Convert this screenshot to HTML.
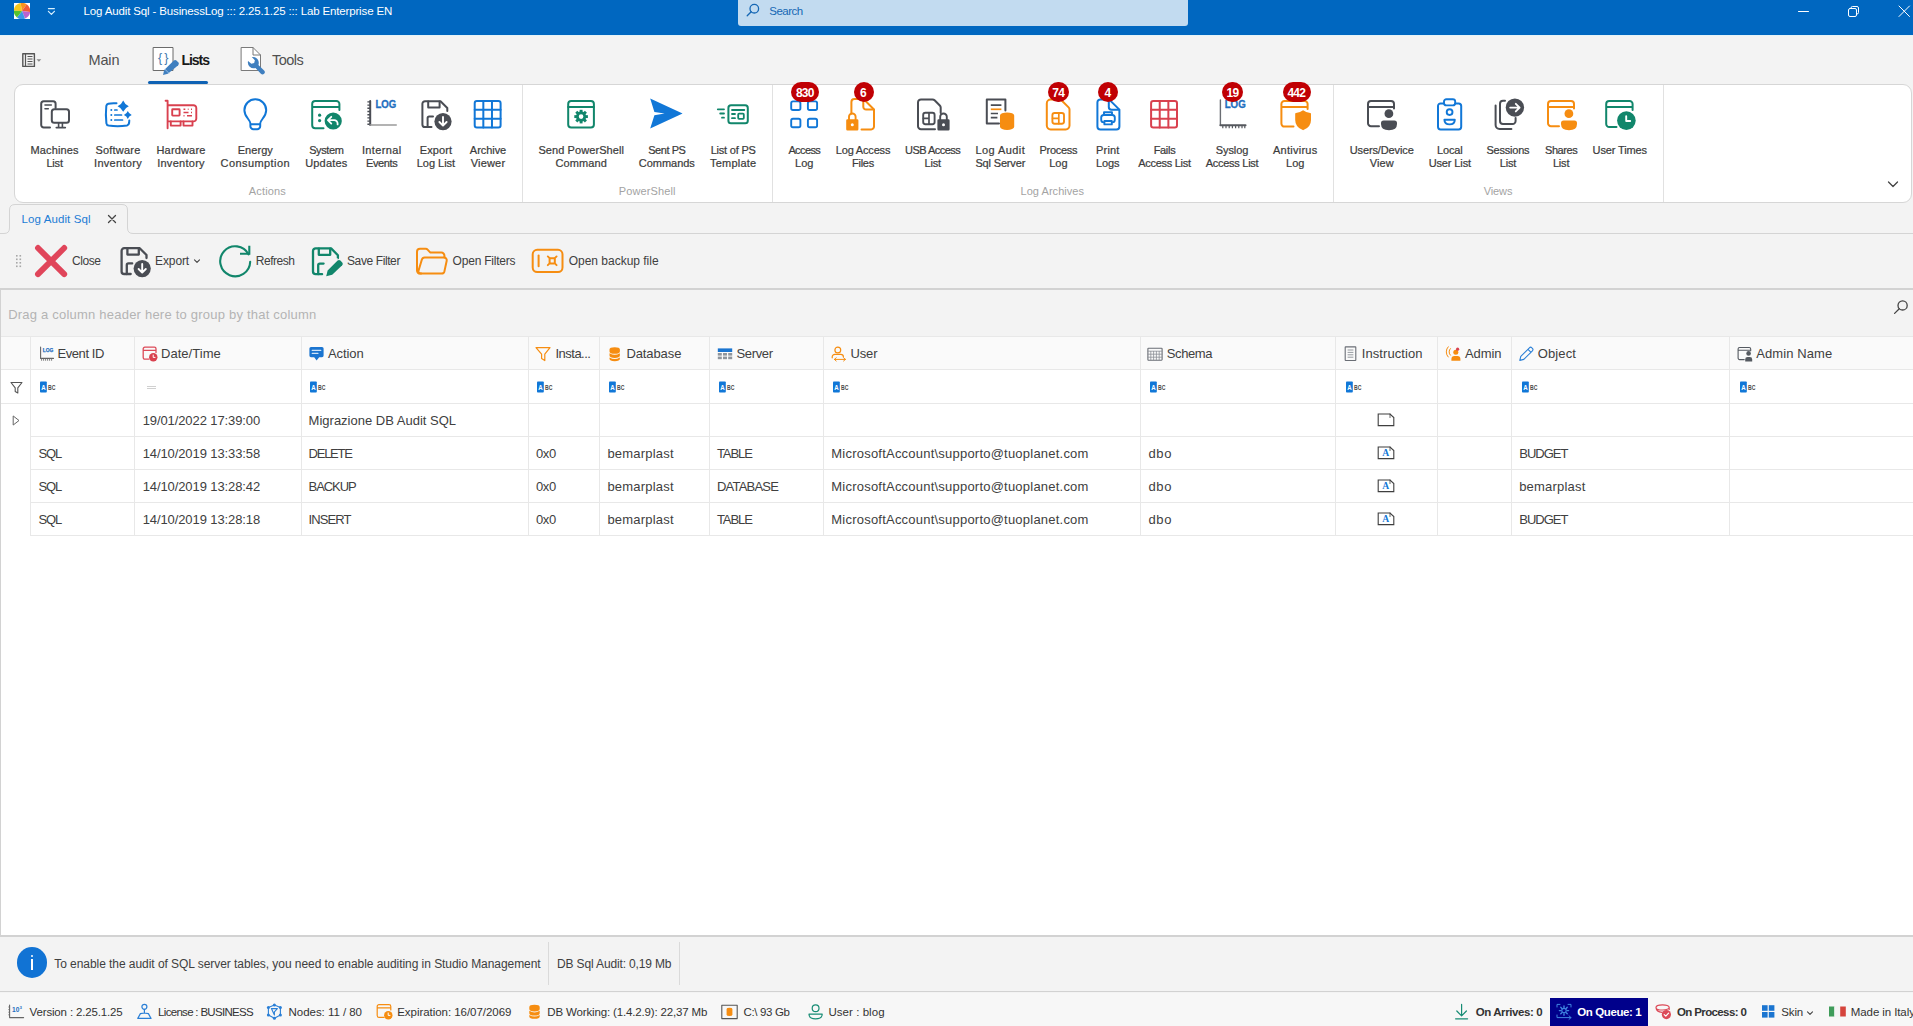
<!DOCTYPE html>
<html lang="en"><head><meta charset="utf-8"><title>Log Audit Sql - BusinessLog</title><style>
html,body{margin:0;padding:0}
body{width:1913px;height:1026px;overflow:hidden;background:#f3f3f3;position:relative;font-family:"Liberation Sans",sans-serif}
.b{position:absolute;display:block;box-sizing:border-box}
svg.b{overflow:visible}
.t{position:absolute;white-space:pre;line-height:16px;font-family:"Liberation Sans",sans-serif}
</style></head>
<body>
<div class="b" style="left:0px;top:0px;width:1913px;height:35px;background:#0067c0"></div>
<div class="b" style="left:0px;top:35px;width:1913px;height:1px;background:#e4f3f8"></div>
<svg class="b" style="left:14px;top:3px;overflow:hidden" width="16" height="16" viewBox="0 0 16 16" fill="none" stroke-linecap="round" stroke-linejoin="round"><rect x="0" y="0" width="16" height="16" fill="#fdfdfd" stroke="none"/><path d="M8 8 L6.58 -0.08 A8.2 8.2 0 0 0 -0.20 7.71 Z" fill="#f8c81c" stroke="none"/><path d="M8 8 L12.70 1.28 A8.2 8.2 0 0 0 6.58 -0.08 Z" fill="#f7921e" stroke="none"/><path d="M8 8 L16.12 9.14 A8.2 8.2 0 0 0 12.70 1.28 Z" fill="#ee5a38" stroke="none"/><path d="M8 8 L11.07 15.60 A8.2 8.2 0 0 0 16.12 9.14 Z" fill="#bb62cf" stroke="none"/><path d="M8 8 L2.95 14.46 A8.2 8.2 0 0 0 11.07 15.60 Z" fill="#3a97e6" stroke="none"/><path d="M8 8 L-0.20 7.71 A8.2 8.2 0 0 0 2.95 14.46 Z" fill="#57c22d" stroke="none"/></svg>
<svg class="b" style="left:47px;top:6px;" width="10" height="10" viewBox="0 0 10 10" fill="none" stroke-linecap="round" stroke-linejoin="round"><path d="M1.4 2.6 H7.4 " stroke="#d9f1ff" stroke-width="1.1" fill="none" /><path d="M1.4 5.3 L4.4 8.4 L7.4 5.3" stroke="#d9f1ff" stroke-width="1.2" fill="none" /></svg>
<span class="t" style="left:83.60px;top:3.32px;font-size:11.5px;color:#fff;letter-spacing:-0.146px;">Log Audit Sql - BusinessLog ::: 2.25.1.25 ::: Lab Enterprise EN</span>
<div class="b" style="left:738px;top:0px;width:450px;height:26px;background:#c2dbf0;border-radius:0 0 3px 3px"></div>
<svg class="b" style="left:746px;top:3px;" width="14" height="14" viewBox="0 0 14 14" fill="none" stroke-linecap="round" stroke-linejoin="round"><circle cx="8.3" cy="5.7" r="4.3" stroke="#1567b4" stroke-width="1.3" fill="none"/><path d="M5.2 8.8 L1.2 12.8" stroke="#1567b4" stroke-width="1.3" fill="none" /></svg>
<span class="t" style="left:769.30px;top:2.82px;font-size:11.5px;color:#1567b4;letter-spacing:-0.506px;">Search</span>
<svg class="b" style="left:1797px;top:5px;" width="13" height="13" viewBox="0 0 13 13" fill="none" stroke-linecap="round" stroke-linejoin="round"><path d="M1.5 6.5 H11.5" stroke="#fff" stroke-width="1" fill="none" /></svg>
<svg class="b" style="left:1847px;top:5px;" width="13" height="13" viewBox="0 0 13 13" fill="none" stroke-linecap="round" stroke-linejoin="round"><rect x="1.5" y="3.5" width="8" height="8" rx="1.5" stroke="#fff" stroke-width="1" fill="none"/><path d="M4 3.5 V3 A1.5 1.5 0 0 1 5.5 1.5 H10 A1.5 1.5 0 0 1 11.5 3 V7.5 A1.5 1.5 0 0 1 10 9 H9.5" stroke="#fff" stroke-width="1" fill="none" /></svg>
<svg class="b" style="left:1898px;top:5px;" width="13" height="13" viewBox="0 0 13 13" fill="none" stroke-linecap="round" stroke-linejoin="round"><path d="M1 1 L11.5 11.5 M11.5 1 L1 11.5" stroke="#fff" stroke-width="1" fill="none" /></svg>
<svg class="b" style="left:21px;top:52px;" width="24" height="16" viewBox="0 0 24 16" fill="none" stroke-linecap="round" stroke-linejoin="round"><rect x="1.8" y="1.8" width="11.6" height="12.6" rx="0" stroke="#555" stroke-width="1.4" fill="none"/><path d="M4.5 2 V14" stroke="#555" stroke-width="1.2" fill="none" /><path d="M6.5 4.5 H11.5 M6.5 7 H11.5 M6.5 9.5 H11.5 M6.5 12 H11.5" stroke="#555" stroke-width="1.1" fill="none" stroke-linecap="butt"/><path d="M15.5 7.2 H20.3 L17.9 9.8 Z" fill="#8a8a8a" stroke="none" /></svg>
<span class="t" style="left:88.50px;top:52.28px;font-size:14.5px;color:#505050;letter-spacing:-0.157px;">Main</span>
<svg class="b" style="left:150px;top:44px;" width="32" height="32" viewBox="0 0 32 32" fill="none" stroke-linecap="round" stroke-linejoin="round"><rect x="3.5" y="3.5" width="19.5" height="23" rx="0" stroke="#6b6b6b" stroke-width="1" fill="#fff"/><text x="13.3" y="17.6" text-anchor="middle" font-family="Liberation Sans, sans-serif" font-size="12.5" fill="#3f78ad" stroke="none" textLength="10.4">{ }</text><path d="M13 31 L14.2 26.1 L23.6 16.7 a2.2 2.2 0 0 1 3.1 0 l1.5 1.5 a2.2 2.2 0 0 1 0 3.1 L17.9 29.8 Z" fill="#3f7fbf" stroke="none" /><path d="M14.9 25.2 L18.8 29.1" stroke="#a9c9ea" stroke-width="0.8" fill="none" /></svg>
<span class="t" style="left:181.50px;top:52.45px;font-size:14px;color:#1a1a1a;letter-spacing:-1.035px;font-weight:700;">Lists</span>
<svg class="b" style="left:238px;top:44px;" width="32" height="32" viewBox="0 0 32 32" fill="none" stroke-linecap="round" stroke-linejoin="round"><path d="M3.5 3.5 H15 L22.5 11 V26.5 H3.5 Z" stroke="#7a7a7a" stroke-width="1" fill="#fff" /><path d="M15 3.5 V11 H22.5" stroke="#7a7a7a" stroke-width="1" fill="none" /><g transform="translate(-2.7 -3.3) scale(1.18)"><path d="M10.8 17.2 a5 5 0 0 0 6.3 6 L21.7 28 a1.9 1.9 0 0 0 2.7-2.7 L19.6 20.5 a5 5 0 0 0-5.6-6.6 l2.6 2.6 -0.6 2.4 -2.4 0.6 Z" fill="#3f7fbf" stroke="none" /></g></svg>
<span class="t" style="left:272.00px;top:52.28px;font-size:14.5px;color:#505050;letter-spacing:-0.510px;">Tools</span>
<div class="b" style="left:148px;top:81px;width:60px;height:3.4px;background:#0f62b4;border-radius:2px"></div>
<div class="b" style="left:14px;top:84px;width:1897.5px;height:118.5px;background:#fff;border:1px solid #d6d6d6;border-radius:9px"></div>
<div class="b" style="left:522px;top:85px;width:1px;height:117px;background:#e1e1e1"></div>
<div class="b" style="left:772px;top:85px;width:1px;height:117px;background:#e1e1e1"></div>
<div class="b" style="left:1333px;top:85px;width:1px;height:117px;background:#e1e1e1"></div>
<div class="b" style="left:1663px;top:85px;width:1px;height:117px;background:#e1e1e1"></div>
<svg class="b" style="left:1887px;top:180px;" width="12" height="9" viewBox="0 0 12 9" fill="none" stroke-linecap="round" stroke-linejoin="round"><path d="M1.5 2 L6 6.5 L10.5 2" stroke="#444" stroke-width="1.3" fill="none" /></svg>
<svg class="b" style="left:39px;top:99px;" width="32" height="32" viewBox="0 0 32 32" fill="none" stroke-linecap="round" stroke-linejoin="round"><path d="M16.6 9 V4.7 a2.5 2.5 0 0 0 -2.5 -2.5 H4.7 a2.5 2.5 0 0 0 -2.5 2.5 V26 a2.5 2.5 0 0 0 2.5 2.5 H11" stroke="#4a4d54" stroke-width="2" fill="none" /><path d="M6 6 H12.3 M6 9.7 H9.3" stroke="#4a4d54" stroke-width="1.6" fill="none" /><rect x="12.8" y="10.2" width="17.2" height="13.6" rx="2.5" stroke="#4a4d54" stroke-width="2" fill="none"/><path d="M19.6 24 V28.3 M23.4 24 V28.3" stroke="#4a4d54" stroke-width="1.6" fill="none" /><path d="M17.4 28.6 H26.2" stroke="#4a4d54" stroke-width="1.9" fill="none" /></svg>
<span class="t" style="left:30.60px;top:141.69px;font-size:11px;color:#3c3c3c;letter-spacing:0.115px;-webkit-text-stroke:0.22px #3c3c3c;">Machines</span>
<span class="t" style="left:46.40px;top:154.79px;font-size:11px;color:#3c3c3c;letter-spacing:-0.179px;-webkit-text-stroke:0.22px #3c3c3c;">List</span>
<svg class="b" style="left:102px;top:99px;" width="32" height="32" viewBox="0 0 32 32" fill="none" stroke-linecap="round" stroke-linejoin="round"><path d="M14.5 4.3 Q9 4 6.3 4.7 Q4.6 5.2 4.3 7 Q3.4 15.5 4.4 24.3 Q4.7 26.2 6.6 26.6 Q16 28 25 26.5 Q26.8 26 27.1 24 L27.3 21.5" stroke="#1177d7" stroke-width="2" fill="none" /><path d="M21.2 1.6000000000000005 Q22.768 5.632 26.799999999999997 7.2 Q22.768 8.768 21.2 12.8 Q19.631999999999998 8.768 15.6 7.2 Q19.631999999999998 5.632 21.2 1.6000000000000005 Z" fill="#1177d7" stroke="none" /><path d="M25.8 12.1 Q26.892 14.908 29.7 16 Q26.892 17.092 25.8 19.9 Q24.708000000000002 17.092 21.900000000000002 16 Q24.708000000000002 14.908 25.8 12.1 Z" fill="#1177d7" stroke="none" /><circle cx="9.3" cy="11" r="1.0" stroke="none" fill="#1177d7"/><circle cx="9.3" cy="16" r="1.0" stroke="none" fill="#1177d7"/><circle cx="9.3" cy="21" r="1.0" stroke="none" fill="#1177d7"/><path d="M12.8 11 H15 M12.8 16 H19.5 M12.8 21 H20.5" stroke="#1177d7" stroke-width="1.7" fill="none" /></svg>
<span class="t" style="left:95.40px;top:141.69px;font-size:11px;color:#3c3c3c;letter-spacing:0.224px;-webkit-text-stroke:0.22px #3c3c3c;">Software</span>
<span class="t" style="left:94.05px;top:154.79px;font-size:11px;color:#3c3c3c;letter-spacing:0.295px;-webkit-text-stroke:0.22px #3c3c3c;">Inventory</span>
<svg class="b" style="left:165px;top:99px;" width="32" height="32" viewBox="0 0 32 32" fill="none" stroke-linecap="round" stroke-linejoin="round"><path d="M0.6 1.8 H2.6 V29.3" stroke="#d9414f" stroke-width="1.9" fill="none" /><path d="M3 6.2 H28.5 a2.8 2.8 0 0 1 2.8 2.8 V19.6 a2.8 2.8 0 0 1 -2.8 2.8 H3" stroke="#d9414f" stroke-width="1.9" fill="none" /><rect x="7.2" y="10.2" width="7.4" height="6.4" rx="0.5" stroke="#d9414f" stroke-width="1.9" fill="none"/><path d="M18.5 10.2 H20.3 M22.8 10.2 H23.6 M26 10.2 H27 M18.5 13.5 H23.5 M26 13.5 H27 M18.5 16.8 H19.5 M22 16.8 H27" stroke="#d9414f" stroke-width="1.6" fill="none" stroke-linecap="butt"/><path d="M5.8 22.4 V26.6 H15.6 V22.4 M18.5 22.4 V26.6 H27.5 V22.4" stroke="#d9414f" stroke-width="1.9" fill="none" /></svg>
<span class="t" style="left:156.50px;top:141.69px;font-size:11px;color:#3c3c3c;letter-spacing:0.164px;-webkit-text-stroke:0.22px #3c3c3c;">Hardware</span>
<span class="t" style="left:157.15px;top:154.79px;font-size:11px;color:#3c3c3c;letter-spacing:0.273px;-webkit-text-stroke:0.22px #3c3c3c;">Inventory</span>
<svg class="b" style="left:239px;top:99px;" width="32" height="32" viewBox="0 0 32 32" fill="none" stroke-linecap="round" stroke-linejoin="round"><path d="M11.4 24.6 C11.4 20.5 5.4 18.2 5.4 11.2 A10.9 10.9 0 0 1 27.2 11.2 C27.2 18.2 21.2 20.5 21.2 24.6 V27.2 a3 3 0 0 1 -3 3 H14.4 a3 3 0 0 1 -3 -3 Z M11.6 25.2 H21" stroke="#1177d7" stroke-width="2" fill="none" /></svg>
<span class="t" style="left:237.70px;top:141.69px;font-size:11px;color:#3c3c3c;letter-spacing:0.058px;-webkit-text-stroke:0.22px #3c3c3c;">Energy</span>
<span class="t" style="left:220.60px;top:154.79px;font-size:11px;color:#3c3c3c;letter-spacing:0.417px;-webkit-text-stroke:0.22px #3c3c3c;">Consumption</span>
<svg class="b" style="left:311px;top:99px;" width="32" height="32" viewBox="0 0 32 32" fill="none" stroke-linecap="round" stroke-linejoin="round"><path d="M12.5 29.2 H4.2 a3 3 0 0 1 -3 -3 V5 a3 3 0 0 1 3 -3 H25.4 a3 3 0 0 1 3 3 V11 M1.2 8 H28.4" stroke="#11866b" stroke-width="2" fill="none" /><circle cx="8.6" cy="16.2" r="1.6" stroke="none" fill="#11866b"/><circle cx="8.6" cy="21.6" r="1.6" stroke="none" fill="#11866b"/><circle cx="22.2" cy="22" r="8.6" stroke="none" fill="#11866b"/><path d="M20.3 17.8 L16.9 21.2 L20.3 24.6 M17.2 21.2 H23.2 a3.4 3.4 0 0 1 3.4 3.4 V25.4" stroke="#fff" stroke-width="1.8" fill="none" /></svg>
<span class="t" style="left:309.15px;top:141.69px;font-size:11px;color:#3c3c3c;letter-spacing:-0.396px;-webkit-text-stroke:0.22px #3c3c3c;">System</span>
<span class="t" style="left:305.20px;top:154.79px;font-size:11px;color:#3c3c3c;letter-spacing:0.175px;-webkit-text-stroke:0.22px #3c3c3c;">Updates</span>
<svg class="b" style="left:366px;top:99px;" width="32" height="32" viewBox="0 0 32 32" fill="none" stroke-linecap="round" stroke-linejoin="round"><path d="M4.2 2 V26" stroke="#4a4d54" stroke-width="2" fill="none" /><path d="M1.4 2.9 H4 M1.4 6.1 H4 M1.4 9.3 H4 M1.4 12.5 H4 M1.4 15.7 H4 M1.4 18.9 H4 M1.4 22.1 H4 M1.4 25.3 H4" stroke="#4a4d54" stroke-width="1.4" fill="none" stroke-linecap="butt"/><path d="M4.2 26 H30.2" stroke="#9a9a9a" stroke-width="1.6" fill="none" /><text x="9.5" y="9.3" font-family="Liberation Sans, sans-serif" font-weight="700" font-size="10.6" fill="#1f6fbf" stroke="#1f6fbf" stroke-width="0.35" textLength="20.8" lengthAdjust="spacingAndGlyphs">LOG</text></svg>
<span class="t" style="left:361.95px;top:141.69px;font-size:11px;color:#3c3c3c;letter-spacing:0.351px;-webkit-text-stroke:0.22px #3c3c3c;">Internal</span>
<span class="t" style="left:366.00px;top:154.79px;font-size:11px;color:#3c3c3c;letter-spacing:-0.372px;-webkit-text-stroke:0.22px #3c3c3c;">Events</span>
<svg class="b" style="left:420px;top:99px;" width="32" height="32" viewBox="0 0 32 32" fill="none" stroke-linecap="round" stroke-linejoin="round"><path d="M11.5 28 H5 a2.6 2.6 0 0 1 -2.6 -2.6 V4.8 a2.6 2.6 0 0 1 2.6 -2.6 H20.5 L27.3 9 V12" stroke="#4a4d54" stroke-width="2" fill="none" /><path d="M8.2 2.5 V8.6 H19.6 V2.5" stroke="#4a4d54" stroke-width="2" fill="none" /><path d="M7.6 28 V19 a1.6 1.6 0 0 1 1.6 -1.6 H13" stroke="#4a4d54" stroke-width="2" fill="none" /><circle cx="23" cy="22.6" r="8.6" stroke="none" fill="#4a4d54"/><path d="M23 18 V26.4 M19.4 23 L23 26.6 L26.6 23" stroke="#fff" stroke-width="1.9" fill="none" /></svg>
<span class="t" style="left:419.75px;top:141.69px;font-size:11px;color:#3c3c3c;letter-spacing:0.085px;-webkit-text-stroke:0.22px #3c3c3c;">Export</span>
<span class="t" style="left:416.75px;top:154.79px;font-size:11px;color:#3c3c3c;letter-spacing:-0.028px;-webkit-text-stroke:0.22px #3c3c3c;">Log List</span>
<svg class="b" style="left:472px;top:99px;" width="32" height="32" viewBox="0 0 32 32" fill="none" stroke-linecap="round" stroke-linejoin="round"><rect x="2.7" y="2" width="25.900000000000002" height="26.5" rx="2.2" stroke="#1177d7" stroke-width="2" fill="none"/><path d="M11.33 2 V28.5 M19.97 2 V28.5 M2.7 10.83 H28.6 M2.7 19.67 H28.6" stroke="#1177d7" stroke-width="2" fill="none" /></svg>
<span class="t" style="left:469.85px;top:141.69px;font-size:11px;color:#3c3c3c;letter-spacing:-0.054px;-webkit-text-stroke:0.22px #3c3c3c;">Archive</span>
<span class="t" style="left:470.75px;top:154.79px;font-size:11px;color:#3c3c3c;letter-spacing:0.179px;-webkit-text-stroke:0.22px #3c3c3c;">Viewer</span>
<svg class="b" style="left:565px;top:99px;" width="32" height="32" viewBox="0 0 32 32" fill="none" stroke-linecap="round" stroke-linejoin="round"><rect x="3.2" y="2" width="25.7" height="26.5" rx="3" stroke="#11866b" stroke-width="2" fill="none"/><path d="M3.2 8 H28.9" stroke="#11866b" stroke-width="2" fill="none" /><line x1="19.70" y1="17.60" x2="22.90" y2="17.60" stroke="#11866b" stroke-width="2.9" stroke-linecap="butt"/><line x1="18.65" y1="20.15" x2="20.91" y2="22.41" stroke="#11866b" stroke-width="2.9" stroke-linecap="butt"/><line x1="16.10" y1="21.20" x2="16.10" y2="24.40" stroke="#11866b" stroke-width="2.9" stroke-linecap="butt"/><line x1="13.55" y1="20.15" x2="11.29" y2="22.41" stroke="#11866b" stroke-width="2.9" stroke-linecap="butt"/><line x1="12.50" y1="17.60" x2="9.30" y2="17.60" stroke="#11866b" stroke-width="2.9" stroke-linecap="butt"/><line x1="13.55" y1="15.05" x2="11.29" y2="12.79" stroke="#11866b" stroke-width="2.9" stroke-linecap="butt"/><line x1="16.10" y1="14.00" x2="16.10" y2="10.80" stroke="#11866b" stroke-width="2.9" stroke-linecap="butt"/><line x1="18.65" y1="15.05" x2="20.91" y2="12.79" stroke="#11866b" stroke-width="2.9" stroke-linecap="butt"/><circle cx="16.1" cy="17.6" r="3.7" stroke="#11866b" stroke-width="2.8" fill="none"/></svg>
<span class="t" style="left:538.40px;top:141.69px;font-size:11px;color:#3c3c3c;letter-spacing:0.081px;-webkit-text-stroke:0.22px #3c3c3c;">Send PowerShell</span>
<span class="t" style="left:555.50px;top:154.79px;font-size:11px;color:#3c3c3c;letter-spacing:0.094px;-webkit-text-stroke:0.22px #3c3c3c;">Command</span>
<svg class="b" style="left:650px;top:99px;" width="32" height="32" viewBox="0 0 32 32" fill="none" stroke-linecap="round" stroke-linejoin="round"><path d="M0.2 -0.4 L32.6 14.6 L0.2 29.5 L4.4 16.2 L14.6 14.6 L4.4 13 Z" fill="#1177d7" stroke="none" /></svg>
<span class="t" style="left:648.15px;top:141.69px;font-size:11px;color:#3c3c3c;letter-spacing:-0.437px;-webkit-text-stroke:0.22px #3c3c3c;">Sent PS</span>
<span class="t" style="left:638.80px;top:154.79px;font-size:11px;color:#3c3c3c;letter-spacing:-0.030px;-webkit-text-stroke:0.22px #3c3c3c;">Commands</span>
<svg class="b" style="left:717px;top:99px;" width="32" height="32" viewBox="0 0 32 32" fill="none" stroke-linecap="round" stroke-linejoin="round"><rect x="11.4" y="6.3" width="19.4" height="18" rx="2.6" stroke="#11866b" stroke-width="2" fill="none"/><path d="M0.8 10.3 H7 M3.2 14.5 H7 M5 18.7 H7" stroke="#11866b" stroke-width="1.8" fill="none" /><path d="M15 11 H27.3 M15 15 H18 M15 19.2 H18" stroke="#11866b" stroke-width="1.8" fill="none" /><rect x="21.2" y="14.6" width="5.6" height="5.2" rx="0.8" stroke="#11866b" stroke-width="1.8" fill="none"/></svg>
<span class="t" style="left:710.65px;top:141.69px;font-size:11px;color:#3c3c3c;letter-spacing:-0.198px;-webkit-text-stroke:0.22px #3c3c3c;">List of PS</span>
<span class="t" style="left:710.05px;top:154.79px;font-size:11px;color:#3c3c3c;letter-spacing:0.208px;-webkit-text-stroke:0.22px #3c3c3c;">Template</span>
<svg class="b" style="left:788px;top:99px;" width="32" height="32" viewBox="0 0 32 32" fill="none" stroke-linecap="round" stroke-linejoin="round"><rect x="3.2" y="2.4" width="9.2" height="8.6" rx="1.8" stroke="#1177d7" stroke-width="1.9" fill="none"/><rect x="19.9" y="2.4" width="9.2" height="8.6" rx="1.8" stroke="#1177d7" stroke-width="1.9" fill="none"/><rect x="3.2" y="19.7" width="9.2" height="8.6" rx="1.8" stroke="#1177d7" stroke-width="1.9" fill="none"/><rect x="19.9" y="19.7" width="9.2" height="8.6" rx="1.8" stroke="#1177d7" stroke-width="1.9" fill="none"/></svg>
<span class="t" style="left:788.40px;top:141.69px;font-size:11px;color:#3c3c3c;letter-spacing:-0.609px;-webkit-text-stroke:0.22px #3c3c3c;">Access</span>
<span class="t" style="left:795.10px;top:154.79px;font-size:11px;color:#3c3c3c;letter-spacing:0.015px;-webkit-text-stroke:0.22px #3c3c3c;">Log</span>
<div class="b" style="left:791.0px;top:82.3px;width:28px;height:19.9px;background:#c00004;border-radius:10px"></div>
<span class="t" style="left:795.90px;top:85.14px;font-size:12px;color:#fff;letter-spacing:-0.741px;font-weight:700;">830</span>
<svg class="b" style="left:844px;top:99px;" width="32" height="32" viewBox="0 0 32 32" fill="none" stroke-linecap="round" stroke-linejoin="round"><path d="M7.4 14.5 V3 a3 3 0 0 1 3 -3 H19.5 L30 10.5 V27.6 a2.8 2.8 0 0 1 -2.8 2.8 H17.5" stroke="#f68d11" stroke-width="2" fill="none" /><path d="M19.3 0.5 V7.8 a2.8 2.8 0 0 0 2.8 2.8 H29.5" stroke="#f68d11" stroke-width="2" fill="none" /><path d="M3.4000000000000004 20.2 H13.2 a1.2 1.2 0 0 1 1.2 1.2 V30.2 a1.2 1.2 0 0 1 -1.2 1.2 H3.4000000000000004 a1.2 1.2 0 0 1 -1.2 -1.2 V21.4 a1.2 1.2 0 0 1 1.2 -1.2 Z" fill="#f68d11" stroke="none" /><path d="M5.0 20.7 V17.8 a3.3 3.3 0 0 1 6.6 0 V20.7" stroke="#f68d11" stroke-width="1.9" fill="none" /><circle cx="8.3" cy="25.799999999999997" r="1.5" stroke="none" fill="#fff"/></svg>
<span class="t" style="left:835.75px;top:141.69px;font-size:11px;color:#3c3c3c;letter-spacing:-0.176px;-webkit-text-stroke:0.22px #3c3c3c;">Log Access</span>
<span class="t" style="left:852.00px;top:154.79px;font-size:11px;color:#3c3c3c;letter-spacing:-0.245px;-webkit-text-stroke:0.22px #3c3c3c;">Files</span>
<div class="b" style="left:853.5px;top:82.3px;width:20px;height:19.9px;background:#c00004;border-radius:10px"></div>
<span class="t" style="left:859.96px;top:85.14px;font-size:12px;color:#fff;font-weight:700;">6</span>
<svg class="b" style="left:917px;top:99px;" width="32" height="32" viewBox="0 0 32 32" fill="none" stroke-linecap="round" stroke-linejoin="round"><path d="M18 30.2 H4 a3 3 0 0 1 -3 -3 V3.4 a3 3 0 0 1 3 -3 H15.5 a3 3 0 0 1 2.1 0.9 L22.8 6.5 a3 3 0 0 1 0.9 2.1 V14" stroke="#4a4d54" stroke-width="2" fill="none" /><rect x="6.2" y="13.8" width="11.4" height="11.4" rx="2.2" stroke="#4a4d54" stroke-width="1.9" fill="none"/><path d="M12 14 V25 M6.4 19.4 H12" stroke="#4a4d54" stroke-width="1.7" fill="none" /><path d="M21.599999999999998 20.2 H31.4 a1.2 1.2 0 0 1 1.2 1.2 V30.2 a1.2 1.2 0 0 1 -1.2 1.2 H21.599999999999998 a1.2 1.2 0 0 1 -1.2 -1.2 V21.4 a1.2 1.2 0 0 1 1.2 -1.2 Z" fill="#4a4d54" stroke="none" /><path d="M23.2 20.7 V17.8 a3.3 3.3 0 0 1 6.6 0 V20.7" stroke="#4a4d54" stroke-width="1.9" fill="none" /><circle cx="26.5" cy="25.799999999999997" r="1.5" stroke="none" fill="#fff"/></svg>
<span class="t" style="left:905.10px;top:141.69px;font-size:11px;color:#3c3c3c;letter-spacing:-0.532px;-webkit-text-stroke:0.22px #3c3c3c;">USB Access</span>
<span class="t" style="left:924.50px;top:154.79px;font-size:11px;color:#3c3c3c;letter-spacing:-0.179px;-webkit-text-stroke:0.22px #3c3c3c;">List</span>
<svg class="b" style="left:984px;top:99px;" width="32" height="32" viewBox="0 0 32 32" fill="none" stroke-linecap="round" stroke-linejoin="round"><path d="M15 24.5 H2.8 V0.4 H21.4 V11.5" stroke="#4a4d54" stroke-width="2" fill="none" /><path d="M6.8 6.1 H17.4 M6.8 14.5 H14 M6.8 18.7 H13.4" stroke="#4a4d54" stroke-width="1.7" fill="none" stroke-linecap="butt"/><path d="M6.8 10.3 H17.4" stroke="#f68d11" stroke-width="1.7" fill="none" stroke-linecap="butt"/><path d="M16 16.6 A7.1 3.2 0 0 1 30.2 16.6 V27.8 A7.1 3.2 0 0 1 16 27.8 Z" fill="#f68d11" stroke="none" /></svg>
<span class="t" style="left:975.45px;top:141.69px;font-size:11px;color:#3c3c3c;letter-spacing:0.425px;-webkit-text-stroke:0.22px #3c3c3c;">Log Audit</span>
<span class="t" style="left:975.45px;top:154.79px;font-size:11px;color:#3c3c3c;letter-spacing:-0.166px;-webkit-text-stroke:0.22px #3c3c3c;">Sql Server</span>
<svg class="b" style="left:1042px;top:99px;" width="32" height="32" viewBox="0 0 32 32" fill="none" stroke-linecap="round" stroke-linejoin="round"><path d="M8.6 0.6 H17.6 a3 3 0 0 1 2.1 0.9 L26.6 8.4 a3 3 0 0 1 0.9 2.1 V26.6 a3.8 3.8 0 0 1 -3.8 3.8 H8.6 a3.8 3.8 0 0 1 -3.8 -3.8 V4.4 a3.8 3.8 0 0 1 3.8 -3.8 Z" stroke="#f68d11" stroke-width="2" fill="none" /><rect x="10.4" y="14" width="11.6" height="10.8" rx="2.2" stroke="#f68d11" stroke-width="1.9" fill="none"/><path d="M16.8 14.2 V24.6 M10.6 19.4 H16.8" stroke="#f68d11" stroke-width="1.7" fill="none" /></svg>
<span class="t" style="left:1039.50px;top:141.69px;font-size:11px;color:#3c3c3c;letter-spacing:-0.277px;-webkit-text-stroke:0.22px #3c3c3c;">Process</span>
<span class="t" style="left:1049.20px;top:154.79px;font-size:11px;color:#3c3c3c;letter-spacing:0.015px;-webkit-text-stroke:0.22px #3c3c3c;">Log</span>
<div class="b" style="left:1047.5px;top:82.3px;width:21.5px;height:19.9px;background:#c00004;border-radius:10px"></div>
<span class="t" style="left:1052.30px;top:85.14px;font-size:12px;color:#fff;letter-spacing:-0.774px;font-weight:700;">74</span>
<svg class="b" style="left:1092px;top:99px;" width="32" height="32" viewBox="0 0 32 32" fill="none" stroke-linecap="round" stroke-linejoin="round"><path d="M5.4 3.4 a3 3 0 0 1 3 -3 H17 L27.4 10.6 V27.4 a3 3 0 0 1 -3 3 H8.4 a3 3 0 0 1 -3 -3 Z" stroke="#1177d7" stroke-width="2" fill="none" /><path d="M16.8 0.6 V8 a2.8 2.8 0 0 0 2.8 2.8 H27" stroke="#1177d7" stroke-width="2" fill="none" /><path d="M12 16 V13.2 H20 V16" stroke="#1177d7" stroke-width="1.9" fill="none" /><rect x="9.2" y="16" width="13.6" height="7.4" rx="2.6" stroke="#1177d7" stroke-width="1.9" fill="none"/><path d="M12.4 22 H19.8 V25.4 H12.4 Z" stroke="#1177d7" stroke-width="1.9" fill="#fff" /></svg>
<span class="t" style="left:1096.10px;top:141.69px;font-size:11px;color:#3c3c3c;letter-spacing:0.156px;-webkit-text-stroke:0.22px #3c3c3c;">Print</span>
<span class="t" style="left:1096.10px;top:154.79px;font-size:11px;color:#3c3c3c;letter-spacing:-0.113px;-webkit-text-stroke:0.22px #3c3c3c;">Logs</span>
<div class="b" style="left:1098.0px;top:82.3px;width:20px;height:19.9px;background:#c00004;border-radius:10px"></div>
<span class="t" style="left:1104.46px;top:85.14px;font-size:12px;color:#fff;font-weight:700;">4</span>
<svg class="b" style="left:1148px;top:99px;" width="32" height="32" viewBox="0 0 32 32" fill="none" stroke-linecap="round" stroke-linejoin="round"><rect x="3.1" y="2" width="25.9" height="26.5" rx="2.2" stroke="#d9414f" stroke-width="2" fill="none"/><path d="M11.73 2 V28.5 M20.37 2 V28.5 M3.1 10.83 H29 M3.1 19.67 H29" stroke="#d9414f" stroke-width="2" fill="none" /></svg>
<span class="t" style="left:1153.65px;top:141.69px;font-size:11px;color:#3c3c3c;letter-spacing:-0.305px;-webkit-text-stroke:0.22px #3c3c3c;">Fails</span>
<span class="t" style="left:1138.25px;top:154.79px;font-size:11px;color:#3c3c3c;letter-spacing:-0.284px;-webkit-text-stroke:0.22px #3c3c3c;">Access List</span>
<svg class="b" style="left:1216px;top:99px;" width="32" height="32" viewBox="0 0 32 32" fill="none" stroke-linecap="round" stroke-linejoin="round"><path d="M4.4 1 V26.4" stroke="#6a6d73" stroke-width="1.4" fill="none" /><path d="M4.4 26.2 H29.6" stroke="#55585e" stroke-width="1.9" fill="none" /><path d="M6.8 27 V29.2 M10 27 V29.2 M13.2 27 V29.2 M16.4 27 V29.2 M19.6 27 V29.2 M22.8 27 V29.2 M26 27 V29.2 M28.8 27 V29.2" stroke="#55585e" stroke-width="1.2" fill="none" stroke-linecap="butt"/><text x="8.7" y="9.3" font-family="Liberation Sans, sans-serif" font-weight="700" font-size="10.6" fill="#1f6fbf" stroke="#1f6fbf" stroke-width="0.35" textLength="21" lengthAdjust="spacingAndGlyphs">LOG</text></svg>
<span class="t" style="left:1215.70px;top:141.69px;font-size:11px;color:#3c3c3c;letter-spacing:-0.070px;-webkit-text-stroke:0.22px #3c3c3c;">Syslog</span>
<span class="t" style="left:1205.65px;top:154.79px;font-size:11px;color:#3c3c3c;letter-spacing:-0.266px;-webkit-text-stroke:0.22px #3c3c3c;">Access List</span>
<div class="b" style="left:1221.5px;top:82.3px;width:21.5px;height:19.9px;background:#c00004;border-radius:10px"></div>
<span class="t" style="left:1226.50px;top:85.14px;font-size:12px;color:#fff;letter-spacing:-0.774px;font-weight:700;">19</span>
<svg class="b" style="left:1280px;top:99px;" width="32" height="32" viewBox="0 0 32 32" fill="none" stroke-linecap="round" stroke-linejoin="round"><path d="M13.5 27.6 H4.4 a3 3 0 0 1 -3 -3 V5 a3 3 0 0 1 3 -3 H24.6 a3 3 0 0 1 3 3 V10 M1.4 8 H27.6" stroke="#f68d11" stroke-width="2" fill="none" /><path d="M23.1 11.2 Q25.8 13.6 30.2 13.9 a0.9 0.9 0 0 1 0.8 0.9 V21 Q31 28.2 23.4 31.1 a0.9 0.9 0 0 1 -0.6 0 Q15.2 28.2 15.2 21 V14.8 a0.9 0.9 0 0 1 0.8 -0.9 Q20.4 13.6 23.1 11.2 Z" fill="#f68d11" stroke="none" /></svg>
<span class="t" style="left:1272.95px;top:141.69px;font-size:11px;color:#3c3c3c;letter-spacing:0.258px;-webkit-text-stroke:0.22px #3c3c3c;">Antivirus</span>
<span class="t" style="left:1286.00px;top:154.79px;font-size:11px;color:#3c3c3c;letter-spacing:0.015px;-webkit-text-stroke:0.22px #3c3c3c;">Log</span>
<div class="b" style="left:1282.5px;top:82.3px;width:28px;height:19.9px;background:#c00004;border-radius:10px"></div>
<span class="t" style="left:1287.40px;top:85.14px;font-size:12px;color:#fff;letter-spacing:-0.741px;font-weight:700;">442</span>
<svg class="b" style="left:1366px;top:99px;" width="32" height="32" viewBox="0 0 32 32" fill="none" stroke-linecap="round" stroke-linejoin="round"><path d="M13 27.2 H5 a3 3 0 0 1 -3 -3 V5 a3 3 0 0 1 3 -3 H25 a3 3 0 0 1 3 3 V9.5 M2 8 H28" stroke="#4a4d54" stroke-width="2" fill="none" /><circle cx="22.9" cy="14.7" r="4.4" stroke="none" fill="#4a4d54"/><path d="M17.6 21.4 H28.4 a2.6 2.6 0 0 1 2.6 2.6 V25 Q31 31.2 23 31.2 Q15 31.2 15 25 V24 a2.6 2.6 0 0 1 2.6 -2.6 Z" fill="#4a4d54" stroke="none" /></svg>
<span class="t" style="left:1349.75px;top:141.69px;font-size:11px;color:#3c3c3c;letter-spacing:-0.125px;-webkit-text-stroke:0.22px #3c3c3c;">Users/Device</span>
<span class="t" style="left:1369.65px;top:154.79px;font-size:11px;color:#3c3c3c;letter-spacing:0.114px;-webkit-text-stroke:0.22px #3c3c3c;">View</span>
<svg class="b" style="left:1433px;top:99px;" width="32" height="32" viewBox="0 0 32 32" fill="none" stroke-linecap="round" stroke-linejoin="round"><path d="M11 4.4 H7.6 a2.6 2.6 0 0 0 -2.6 2.6 V27.8 a2.6 2.6 0 0 0 2.6 2.6 H25.6 a2.6 2.6 0 0 0 2.6 -2.6 V7 a2.6 2.6 0 0 0 -2.6 -2.6 H22.2" stroke="#1177d7" stroke-width="2" fill="none" /><rect x="11" y="0.2" width="11.2" height="6.2" rx="2.4" stroke="#1177d7" stroke-width="1.9" fill="none"/><circle cx="16.6" cy="13.1" r="2.9" stroke="#1177d7" stroke-width="1.9" fill="none"/><path d="M11.4 20.8 H21.8 Q21.8 25.4 16.6 25.4 Q11.4 25.4 11.4 20.8 Z" stroke="#1177d7" stroke-width="1.9" fill="none" /></svg>
<span class="t" style="left:1437.10px;top:141.69px;font-size:11px;color:#3c3c3c;letter-spacing:-0.180px;-webkit-text-stroke:0.22px #3c3c3c;">Local</span>
<span class="t" style="left:1428.65px;top:154.79px;font-size:11px;color:#3c3c3c;letter-spacing:-0.122px;-webkit-text-stroke:0.22px #3c3c3c;">User List</span>
<svg class="b" style="left:1493px;top:99px;" width="32" height="32" viewBox="0 0 32 32" fill="none" stroke-linecap="round" stroke-linejoin="round"><path d="M12 1.8 H10 a3 3 0 0 0 -3 3 V22 a3 3 0 0 0 3 3 H19.6 a3 3 0 0 0 3 -3 V19" stroke="#4a4d54" stroke-width="2" fill="none" /><path d="M2.6 6.5 V26 a4 4 0 0 0 4 4 H18.4" stroke="#4a4d54" stroke-width="2" fill="none" /><circle cx="21.9" cy="8.6" r="9.2" stroke="none" fill="#4a4d54"/><path d="M17.2 8.6 H26.4 M22.8 4.8 L26.6 8.6 L22.8 12.4" stroke="#fff" stroke-width="1.9" fill="none" /></svg>
<span class="t" style="left:1486.40px;top:141.69px;font-size:11px;color:#3c3c3c;letter-spacing:-0.204px;-webkit-text-stroke:0.22px #3c3c3c;">Sessions</span>
<span class="t" style="left:1499.70px;top:154.79px;font-size:11px;color:#3c3c3c;letter-spacing:-0.179px;-webkit-text-stroke:0.22px #3c3c3c;">List</span>
<svg class="b" style="left:1546px;top:99px;" width="32" height="32" viewBox="0 0 32 32" fill="none" stroke-linecap="round" stroke-linejoin="round"><path d="M13 27.2 H5 a3 3 0 0 1 -3 -3 V5 a3 3 0 0 1 3 -3 H25 a3 3 0 0 1 3 3 V9.5 M2 8 H28" stroke="#f68d11" stroke-width="2" fill="none" /><circle cx="22.9" cy="14.7" r="4.4" stroke="none" fill="#f68d11"/><path d="M17.6 21.4 H28.4 a2.6 2.6 0 0 1 2.6 2.6 V25 Q31 31.2 23 31.2 Q15 31.2 15 25 V24 a2.6 2.6 0 0 1 2.6 -2.6 Z" fill="#f68d11" stroke="none" /></svg>
<span class="t" style="left:1545.00px;top:141.69px;font-size:11px;color:#3c3c3c;letter-spacing:-0.442px;-webkit-text-stroke:0.22px #3c3c3c;">Shares</span>
<span class="t" style="left:1552.90px;top:154.79px;font-size:11px;color:#3c3c3c;letter-spacing:-0.179px;-webkit-text-stroke:0.22px #3c3c3c;">List</span>
<svg class="b" style="left:1604px;top:99px;" width="32" height="32" viewBox="0 0 32 32" fill="none" stroke-linecap="round" stroke-linejoin="round"><path d="M12.5 28 H5.2 a3 3 0 0 1 -3 -3 V5 a3 3 0 0 1 3 -3 H25.6 a3 3 0 0 1 3 3 V11 M2.2 8 H28.6" stroke="#11866b" stroke-width="2" fill="none" /><circle cx="22.4" cy="21.6" r="9.3" stroke="none" fill="#11866b"/><path d="M22.2 17.2 V22 H26.2" stroke="#fff" stroke-width="1.9" fill="none" /></svg>
<span class="t" style="left:1592.60px;top:141.69px;font-size:11px;color:#3c3c3c;letter-spacing:-0.122px;-webkit-text-stroke:0.22px #3c3c3c;">User Times</span>
<span class="t" style="left:248.75px;top:182.79px;font-size:11px;color:#a3a3a3;letter-spacing:0.175px;">Actions</span>
<span class="t" style="left:618.75px;top:182.79px;font-size:11px;color:#a3a3a3;letter-spacing:0.126px;">PowerShell</span>
<span class="t" style="left:1020.55px;top:182.79px;font-size:11px;color:#a3a3a3;letter-spacing:0.043px;">Log Archives</span>
<span class="t" style="left:1483.65px;top:182.79px;font-size:11px;color:#a3a3a3;letter-spacing:-0.089px;">Views</span>
<svg class="b" style="left:0;top:203px" width="1913" height="32" viewBox="0 0 1913 32" fill="none"><path d="M0 30.5 H4 Q9.5 30.5 9.5 25 V7 Q9.5 1.5 15 1.5 H122 Q127.5 1.5 127.5 7 V25 Q127.5 30.5 133 30.5 H1913" stroke="#d4d4d4" stroke-width="1"/></svg>
<span class="t" style="left:21.60px;top:210.92px;font-size:11.5px;color:#1c7cd5;letter-spacing:0.094px;">Log Audit Sql</span>
<svg class="b" style="left:107px;top:214px;" width="10" height="10" viewBox="0 0 10 10" fill="none" stroke-linecap="round" stroke-linejoin="round"><path d="M1.5 1.5 L8.5 8.5 M8.5 1.5 L1.5 8.5" stroke="#444" stroke-width="1.3" fill="none" /></svg>
<svg class="b" style="left:15px;top:254px;" width="8" height="14" viewBox="0 0 8 14" fill="none" stroke-linecap="round" stroke-linejoin="round"><rect x="1" y="1" width="1.6" height="1.6" fill="#a8a8a8"/><rect x="1" y="4.5" width="1.6" height="1.6" fill="#a8a8a8"/><rect x="1" y="8" width="1.6" height="1.6" fill="#a8a8a8"/><rect x="1" y="11.5" width="1.6" height="1.6" fill="#a8a8a8"/><rect x="4.5" y="1" width="1.6" height="1.6" fill="#a8a8a8"/><rect x="4.5" y="4.5" width="1.6" height="1.6" fill="#a8a8a8"/><rect x="4.5" y="8" width="1.6" height="1.6" fill="#a8a8a8"/><rect x="4.5" y="11.5" width="1.6" height="1.6" fill="#a8a8a8"/></svg>
<svg class="b" style="left:35px;top:245px;" width="32" height="32" viewBox="0 0 32 32" fill="none" stroke-linecap="round" stroke-linejoin="round"><path d="M3 3 L29.2 29.2 M29.2 3 L3 29.2" stroke="#e0455a" stroke-width="5.9" fill="none" /></svg>
<span class="t" style="left:71.90px;top:253.04px;font-size:12px;color:#404040;letter-spacing:-0.396px;">Close</span>
<svg class="b" style="left:120px;top:245px;" width="32" height="32" viewBox="0 0 32 32" fill="none" stroke-linecap="round" stroke-linejoin="round"><g transform="translate(-0.8 1.0) scale(1.0)"><path d="M11.5 28 H5 a2.6 2.6 0 0 1 -2.6 -2.6 V4.8 a2.6 2.6 0 0 1 2.6 -2.6 H20.5 L27.3 9 V12" stroke="#4a4d54" stroke-width="2.3" fill="none" /><path d="M8.2 2.5 V8.6 H19.6 V2.5" stroke="#4a4d54" stroke-width="2.3" fill="none" /><path d="M7.6 28 V19 a1.6 1.6 0 0 1 1.6 -1.6 H13" stroke="#4a4d54" stroke-width="2.3" fill="none" /><circle cx="23" cy="22.6" r="8.6" stroke="none" fill="#4a4d54"/><path d="M23 18 V26.4 M19.4 23 L23 26.6 L26.6 23" stroke="#fff" stroke-width="1.9" fill="none" /></g></svg>
<span class="t" style="left:155.10px;top:253.04px;font-size:12px;color:#404040;letter-spacing:-0.130px;">Export</span>
<svg class="b" style="left:193px;top:257px;" width="8" height="8" viewBox="0 0 8 8" fill="none" stroke-linecap="round" stroke-linejoin="round"><path d="M1.5 2.8 L4 5.3 L6.5 2.8" stroke="#444" stroke-width="1.1" fill="none" /></svg>
<svg class="b" style="left:219px;top:245px;" width="32" height="32" viewBox="0 0 32 32" fill="none" stroke-linecap="round" stroke-linejoin="round"><path d="M29.5 9.3 A15 15 0 1 0 31.2 16.7" stroke="#11866b" stroke-width="2.1" fill="none" /><path d="M21 8.7 H30.3 V0.7" stroke="#11866b" stroke-width="2.1" fill="none" stroke-linejoin="miter" stroke-linecap="butt"/></svg>
<span class="t" style="left:255.80px;top:253.04px;font-size:12px;color:#404040;letter-spacing:-0.474px;">Refresh</span>
<svg class="b" style="left:312px;top:245px;" width="32" height="32" viewBox="0 0 32 32" fill="none" stroke-linecap="round" stroke-linejoin="round"><g transform="translate(-1.4 1.2)"><path d="M11.5 28 H5 a2.6 2.6 0 0 1 -2.6 -2.6 V4.8 a2.6 2.6 0 0 1 2.6 -2.6 H20.5 L27.3 9 V12" stroke="#11866b" stroke-width="2.3" fill="none" /><path d="M8.2 2.5 V8.6 H19.6 V2.5" stroke="#11866b" stroke-width="2.3" fill="none" /><path d="M7.6 28 V19 a1.6 1.6 0 0 1 1.6 -1.6 H13" stroke="#11866b" stroke-width="2.3" fill="none" /></g><path d="M14.2 31.2 L15.6 25.6 L25.6 15.6 a2 2 0 0 1 2.8 0 l1.8 1.8 a2 2 0 0 1 0 2.8 L20.2 29.8 Z" fill="#11866b" stroke="none" /><path d="M13 30.4 L15 23.8 L25 13.8" stroke="#f3f3f3" stroke-width="1.4" fill="none" /></svg>
<span class="t" style="left:347.00px;top:253.04px;font-size:12px;color:#404040;letter-spacing:-0.396px;">Save Filter</span>
<svg class="b" style="left:416px;top:245px;" width="32" height="32" viewBox="0 0 32 32" fill="none" stroke-linecap="round" stroke-linejoin="round"><path d="M5.2 28.6 H4 a3 3 0 0 1 -3 -3 V6.8 a3 3 0 0 1 3 -3 H9.6 a3 3 0 0 1 2.2 1 L14.4 7.6 H25.4 a3 3 0 0 1 3 3 V12.6" stroke="#f68d11" stroke-width="2" fill="none" /><path d="M8.6 12.6 H28.2 a2.6 2.6 0 0 1 2.5 3.2 L28.4 26.4 a3 3 0 0 1 -2.9 2.2 H4.6 a2.2 2.2 0 0 1 -2.1 -2.8 L5.8 14.8 a3 3 0 0 1 2.8 -2.2 Z" stroke="#f68d11" stroke-width="2" fill="none" /></svg>
<span class="t" style="left:452.60px;top:253.04px;font-size:12px;color:#404040;letter-spacing:-0.213px;">Open Filters</span>
<svg class="b" style="left:531px;top:245px;" width="32" height="32" viewBox="0 0 32 32" fill="none" stroke-linecap="round" stroke-linejoin="round"><rect x="1.7" y="4.8" width="29.8" height="22.2" rx="4.5" stroke="#f68d11" stroke-width="2" fill="none"/><path d="M7.6 10.6 V21.2" stroke="#f68d11" stroke-width="2" fill="none" /><rect x="18.6" y="13.2" width="5.2" height="5.2" rx="0.8" stroke="#f68d11" stroke-width="2" fill="none"/><path d="M16.8 11.4 L18.6 13.2 M25.6 11.4 L23.8 13.2 M16.8 20.2 L18.6 18.4 M25.6 20.2 L23.8 18.4" stroke="#f68d11" stroke-width="1.9" fill="none" /></svg>
<span class="t" style="left:568.70px;top:253.04px;font-size:12px;color:#404040;letter-spacing:-0.010px;">Open backup file</span>
<div class="b" style="left:0px;top:288px;width:1913px;height:2px;background:#d2d2d2"></div>
<div class="b" style="left:0px;top:290px;width:1913px;height:646px;background:#fff"></div>
<div class="b" style="left:0px;top:290px;width:1913px;height:47px;background:#f3f3f3"></div>
<div class="b" style="left:0px;top:290px;width:1px;height:646px;background:#d2d2d2"></div>
<span class="t" style="left:8.20px;top:307.10px;font-size:13px;color:#b4b4b4;letter-spacing:0.216px;">Drag a column header here to group by that column</span>
<svg class="b" style="left:1893px;top:299px;" width="16" height="16" viewBox="0 0 16 16" fill="none" stroke-linecap="round" stroke-linejoin="round"><circle cx="9.6" cy="6.4" r="4.6" stroke="#444" stroke-width="1.3" fill="none"/><path d="M6.3 9.7 L1.6 14.4" stroke="#444" stroke-width="1.3" fill="none" /></svg>
<div class="b" style="left:1px;top:337px;width:1912px;height:32px;background:#fafafa"></div>
<div class="b" style="left:1px;top:336px;width:1912px;height:1px;background:#e8e8e8"></div>
<div class="b" style="left:1px;top:369px;width:1912px;height:1px;background:#e8e8e8"></div>
<div class="b" style="left:1px;top:403px;width:1912px;height:1px;background:#e8e8e8"></div>
<div class="b" style="left:30px;top:436px;width:1883px;height:1px;background:#e8e8e8"></div>
<div class="b" style="left:30px;top:469px;width:1883px;height:1px;background:#e8e8e8"></div>
<div class="b" style="left:30px;top:502px;width:1883px;height:1px;background:#e8e8e8"></div>
<div class="b" style="left:30px;top:535px;width:1883px;height:1px;background:#e8e8e8"></div>
<div class="b" style="left:30px;top:336px;width:1px;height:200px;background:#e8e8e8"></div>
<div class="b" style="left:134px;top:336px;width:1px;height:200px;background:#e8e8e8"></div>
<div class="b" style="left:301px;top:336px;width:1px;height:200px;background:#e8e8e8"></div>
<div class="b" style="left:528px;top:336px;width:1px;height:200px;background:#e8e8e8"></div>
<div class="b" style="left:599px;top:336px;width:1px;height:200px;background:#e8e8e8"></div>
<div class="b" style="left:709px;top:336px;width:1px;height:200px;background:#e8e8e8"></div>
<div class="b" style="left:823px;top:336px;width:1px;height:200px;background:#e8e8e8"></div>
<div class="b" style="left:1140px;top:336px;width:1px;height:200px;background:#e8e8e8"></div>
<div class="b" style="left:1335px;top:336px;width:1px;height:200px;background:#e8e8e8"></div>
<div class="b" style="left:1437px;top:336px;width:1px;height:200px;background:#e8e8e8"></div>
<div class="b" style="left:1511px;top:336px;width:1px;height:200px;background:#e8e8e8"></div>
<div class="b" style="left:1729px;top:336px;width:1px;height:200px;background:#e8e8e8"></div>
<svg class="b" style="left:39px;top:345.5px;" width="16" height="16" viewBox="0 0 16 16" fill="none" stroke-linecap="round" stroke-linejoin="round"><path d="M1.6 1 V12.4 H14.5" stroke="#666" stroke-width="1.1" fill="none" /><path d="M2.6 13.2 V14.6 M4.6 13.2 V14.6 M6.6 13.2 V14.6 M8.6 13.2 V14.6 M10.6 13.2 V14.6 M12.6 13.2 V14.6" stroke="#666" stroke-width="1" fill="none" stroke-linecap="butt"/><text x="3.8" y="5.8" font-family="Liberation Sans, sans-serif" font-weight="700" font-size="5.6" fill="#1f6fbf" stroke="#1f6fbf" stroke-width="0.25" textLength="10.6" lengthAdjust="spacingAndGlyphs">LOG</text></svg>
<span class="t" style="left:57.40px;top:345.90px;font-size:13px;color:#404040;letter-spacing:-0.407px;">Event ID</span>
<svg class="b" style="left:142px;top:345.5px;" width="16" height="16" viewBox="0 0 16 16" fill="none" stroke-linecap="round" stroke-linejoin="round"><path d="M7 13.2 H2.8 a1.6 1.6 0 0 1 -1.6 -1.6 V2.8 a1.6 1.6 0 0 1 1.6 -1.6 H12.4 a1.6 1.6 0 0 1 1.6 1.6 V6.5 M1.2 4.4 H14" stroke="#dc4a58" stroke-width="1.3" fill="none" /><circle cx="11.3" cy="11.2" r="4.2" stroke="none" fill="#d9414f"/><path d="M11.2 9 V11.4 H13" stroke="#fff" stroke-width="1" fill="none" /></svg>
<span class="t" style="left:161.00px;top:345.90px;font-size:13px;color:#404040;letter-spacing:0.036px;">Date/Time</span>
<svg class="b" style="left:309px;top:345.5px;" width="16" height="16" viewBox="0 0 16 16" fill="none" stroke-linecap="round" stroke-linejoin="round"><path d="M2 1 H13 a1.6 1.6 0 0 1 1.6 1.6 V9.6 a1.6 1.6 0 0 1 -1.6 1.6 H10.2 L7.6 14.6 L5.2 11.2 H2 a1.6 1.6 0 0 1 -1.6 -1.6 V2.6 A1.6 1.6 0 0 1 2 1 Z" fill="#1b75d0" stroke="none" /><path d="M3.2 4.4 H11.8 M3.2 7.4 H9" stroke="#cfe4f8" stroke-width="1.1" fill="none" /></svg>
<span class="t" style="left:327.90px;top:345.90px;font-size:13px;color:#404040;letter-spacing:-0.055px;">Action</span>
<svg class="b" style="left:535px;top:345.5px;" width="16" height="16" viewBox="0 0 16 16" fill="none" stroke-linecap="round" stroke-linejoin="round"><path d="M1 1.6 H15 L9.8 8.2 V14.6 L6.6 12.6 V8.2 Z" stroke="#f68d11" stroke-width="1.2" fill="none" /></svg>
<span class="t" style="left:555.40px;top:345.90px;font-size:13px;color:#404040;letter-spacing:-0.490px;">Insta...</span>
<svg class="b" style="left:607px;top:345.5px;" width="16" height="16" viewBox="0 0 16 16" fill="none" stroke-linecap="round" stroke-linejoin="round"><path d="M2.5 3.6 A5.2 2.4 0 0 1 12.9 3.6 V5.4 A5.2 2.4 0 0 1 2.5 5.4 Z" fill="#f68d11" stroke="none" /><path d="M2.5 7.2 Q7.7 10.4 12.9 7.2 V9.6 A5.2 2.4 0 0 1 2.5 9.6 Z" fill="#f68d11" stroke="none" /><path d="M2.5 11.4 Q7.7 14.6 12.9 11.4 V12.8 A5.2 2.4 0 0 1 2.5 12.8 Z" fill="#f68d11" stroke="none" /></svg>
<span class="t" style="left:626.40px;top:345.90px;font-size:13px;color:#404040;letter-spacing:-0.094px;">Database</span>
<svg class="b" style="left:717px;top:345.5px;" width="16" height="16" viewBox="0 0 16 16" fill="none" stroke-linecap="round" stroke-linejoin="round"><rect x="0.8" y="2.4" width="14.4" height="3.6" fill="#1b75d0" stroke="none"/><rect x="0.8" y="7" width="4" height="2.6" fill="#8f959c" stroke="none"/><rect x="0.8" y="10.6" width="4" height="2.6" fill="#8f959c" stroke="none"/><rect x="6" y="7" width="4" height="2.6" fill="#8f959c" stroke="none"/><rect x="6" y="10.6" width="4" height="2.6" fill="#8f959c" stroke="none"/><rect x="11.2" y="7" width="4" height="2.6" fill="#8f959c" stroke="none"/><rect x="11.2" y="10.6" width="4" height="2.6" fill="#8f959c" stroke="none"/></svg>
<span class="t" style="left:736.50px;top:345.90px;font-size:13px;color:#404040;letter-spacing:-0.365px;">Server</span>
<svg class="b" style="left:831px;top:345.5px;" width="16" height="16" viewBox="0 0 16 16" fill="none" stroke-linecap="round" stroke-linejoin="round"><circle cx="6.8" cy="4" r="2.9" stroke="#f68d11" stroke-width="1.2" fill="none"/><path d="M1.2 11.8 V11 a2.6 2.6 0 0 1 2.6 -2.6 H9.8 a2.6 2.6 0 0 1 2.6 2.6" stroke="#f68d11" stroke-width="1.2" fill="none" /><path d="M3.4 13.4 H14.4 M5.2 11.8 L3.4 13.4 L5.2 15 M12.6 11.8 L14.4 13.4 L12.6 15" stroke="#f68d11" stroke-width="1" fill="none" /></svg>
<span class="t" style="left:850.50px;top:345.90px;font-size:13px;color:#404040;letter-spacing:-0.162px;">User</span>
<svg class="b" style="left:1147px;top:345.5px;" width="16" height="16" viewBox="0 0 16 16" fill="none" stroke-linecap="round" stroke-linejoin="round"><rect x="0.9" y="2.2" width="14.2" height="12" rx="0.6" stroke="#6a6e75" stroke-width="1.1" fill="none"/><path d="M0.9 5.2 H15 M3.8 5.4 V14 M6.6 5.4 V14 M9.4 5.4 V14 M12.2 5.4 V14 M1 8.2 H15 M1 11.2 H15" stroke="#8a8e95" stroke-width="0.8" fill="none" /></svg>
<span class="t" style="left:1166.80px;top:345.90px;font-size:13px;color:#404040;letter-spacing:-0.415px;">Schema</span>
<svg class="b" style="left:1343px;top:345.5px;" width="16" height="16" viewBox="0 0 16 16" fill="none" stroke-linecap="round" stroke-linejoin="round"><rect x="2.2" y="0.9" width="10.6" height="13.6" rx="0.4" stroke="#6a6e75" stroke-width="1.1" fill="none"/><path d="M4.6 4 H10.4 M4.6 6.4 H10.4 M4.6 8.8 H10.4 M4.6 11.2 H10.4" stroke="#8a8e95" stroke-width="0.9" fill="none" stroke-linecap="butt"/></svg>
<span class="t" style="left:1361.70px;top:345.90px;font-size:13px;color:#404040;letter-spacing:0.084px;">Instruction</span>
<svg class="b" style="left:1445px;top:345.5px;" width="16" height="16" viewBox="0 0 16 16" fill="none" stroke-linecap="round" stroke-linejoin="round"><circle cx="10.8" cy="6.2" r="2.5" stroke="none" fill="#f68d11"/><path d="M6.4 14.8 V13 a3 3 0 0 1 3 -3 H12.4 a3 3 0 0 1 3 3 V14.8 Z" fill="#f68d11" stroke="none" /><path d="M5.4 2.6 A4.6 4.6 0 0 0 5.4 9.2 M3.2 0.8 A7.4 7.4 0 0 0 3.2 11" stroke="#f68d11" stroke-width="1" fill="none" /><circle cx="12.6" cy="3.2" r="1.6" stroke="none" fill="#d9414f"/></svg>
<span class="t" style="left:1464.90px;top:345.90px;font-size:13px;color:#404040;letter-spacing:-0.070px;">Admin</span>
<svg class="b" style="left:1518px;top:345.5px;" width="16" height="16" viewBox="0 0 16 16" fill="none" stroke-linecap="round" stroke-linejoin="round"><path d="M1.8 14.4 L2.8 10.4 L11.4 1.8 a1.7 1.7 0 0 1 2.4 0 l0.6 0.6 a1.7 1.7 0 0 1 0 2.4 L5.8 13.4 Z M10 3.4 L12.8 6.2" stroke="#2a7fd6" stroke-width="1.1" fill="none" /></svg>
<span class="t" style="left:1537.80px;top:345.90px;font-size:13px;color:#404040;letter-spacing:0.105px;">Object</span>
<svg class="b" style="left:1737px;top:345.5px;" width="16" height="16" viewBox="0 0 16 16" fill="none" stroke-linecap="round" stroke-linejoin="round"><path d="M7.2 13.6 H2.6 a1.5 1.5 0 0 1 -1.5 -1.5 V3 a1.5 1.5 0 0 1 1.5 -1.5 H12.2 a1.5 1.5 0 0 1 1.5 1.5 V4.8 M1.2 4.2 H13.6" stroke="#555a61" stroke-width="1.1" fill="none" /><circle cx="11.6" cy="7.4" r="2.3" stroke="none" fill="#555a61"/><path d="M8.2 15.4 V13.4 a2.4 2.4 0 0 1 2.4 -2.4 H12.8 a2.4 2.4 0 0 1 2.4 2.4 V15.4 Z" fill="#555a61" stroke="none" /></svg>
<span class="t" style="left:1756.30px;top:345.90px;font-size:13px;color:#404040;letter-spacing:0.076px;">Admin Name</span>
<svg class="b" style="left:9.5px;top:381px;" width="13" height="13" viewBox="0 0 13 13" fill="none" stroke-linecap="round" stroke-linejoin="round"><path d="M1 1.5 H12 L7.8 6.8 V12 L5.2 10.6 V6.8 Z" stroke="#555" stroke-width="1.1" fill="none" /></svg>
<svg class="b" style="left:39px;top:381px;" width="17" height="12" viewBox="0 0 17 12" fill="none" stroke-linecap="round" stroke-linejoin="round"><rect x="1" y="0.4" width="6.8" height="11.2" rx="0.8" fill="#1177d7" stroke="none"/><text x="4.4" y="8.7" text-anchor="middle" font-family="Liberation Sans, sans-serif" font-weight="700" font-size="6.6" fill="#fff" stroke="none" textLength="4.4" lengthAdjust="spacingAndGlyphs">A</text><text x="9" y="8.8" font-family="Liberation Sans, sans-serif" font-weight="700" font-size="6.8" fill="#4a4a4a" stroke="none" textLength="7.4" lengthAdjust="spacingAndGlyphs">BC</text></svg>
<svg class="b" style="left:309px;top:381px;" width="17" height="12" viewBox="0 0 17 12" fill="none" stroke-linecap="round" stroke-linejoin="round"><rect x="1" y="0.4" width="6.8" height="11.2" rx="0.8" fill="#1177d7" stroke="none"/><text x="4.4" y="8.7" text-anchor="middle" font-family="Liberation Sans, sans-serif" font-weight="700" font-size="6.6" fill="#fff" stroke="none" textLength="4.4" lengthAdjust="spacingAndGlyphs">A</text><text x="9" y="8.8" font-family="Liberation Sans, sans-serif" font-weight="700" font-size="6.8" fill="#4a4a4a" stroke="none" textLength="7.4" lengthAdjust="spacingAndGlyphs">BC</text></svg>
<svg class="b" style="left:536px;top:381px;" width="17" height="12" viewBox="0 0 17 12" fill="none" stroke-linecap="round" stroke-linejoin="round"><rect x="1" y="0.4" width="6.8" height="11.2" rx="0.8" fill="#1177d7" stroke="none"/><text x="4.4" y="8.7" text-anchor="middle" font-family="Liberation Sans, sans-serif" font-weight="700" font-size="6.6" fill="#fff" stroke="none" textLength="4.4" lengthAdjust="spacingAndGlyphs">A</text><text x="9" y="8.8" font-family="Liberation Sans, sans-serif" font-weight="700" font-size="6.8" fill="#4a4a4a" stroke="none" textLength="7.4" lengthAdjust="spacingAndGlyphs">BC</text></svg>
<svg class="b" style="left:608px;top:381px;" width="17" height="12" viewBox="0 0 17 12" fill="none" stroke-linecap="round" stroke-linejoin="round"><rect x="1" y="0.4" width="6.8" height="11.2" rx="0.8" fill="#1177d7" stroke="none"/><text x="4.4" y="8.7" text-anchor="middle" font-family="Liberation Sans, sans-serif" font-weight="700" font-size="6.6" fill="#fff" stroke="none" textLength="4.4" lengthAdjust="spacingAndGlyphs">A</text><text x="9" y="8.8" font-family="Liberation Sans, sans-serif" font-weight="700" font-size="6.8" fill="#4a4a4a" stroke="none" textLength="7.4" lengthAdjust="spacingAndGlyphs">BC</text></svg>
<svg class="b" style="left:718px;top:381px;" width="17" height="12" viewBox="0 0 17 12" fill="none" stroke-linecap="round" stroke-linejoin="round"><rect x="1" y="0.4" width="6.8" height="11.2" rx="0.8" fill="#1177d7" stroke="none"/><text x="4.4" y="8.7" text-anchor="middle" font-family="Liberation Sans, sans-serif" font-weight="700" font-size="6.6" fill="#fff" stroke="none" textLength="4.4" lengthAdjust="spacingAndGlyphs">A</text><text x="9" y="8.8" font-family="Liberation Sans, sans-serif" font-weight="700" font-size="6.8" fill="#4a4a4a" stroke="none" textLength="7.4" lengthAdjust="spacingAndGlyphs">BC</text></svg>
<svg class="b" style="left:832px;top:381px;" width="17" height="12" viewBox="0 0 17 12" fill="none" stroke-linecap="round" stroke-linejoin="round"><rect x="1" y="0.4" width="6.8" height="11.2" rx="0.8" fill="#1177d7" stroke="none"/><text x="4.4" y="8.7" text-anchor="middle" font-family="Liberation Sans, sans-serif" font-weight="700" font-size="6.6" fill="#fff" stroke="none" textLength="4.4" lengthAdjust="spacingAndGlyphs">A</text><text x="9" y="8.8" font-family="Liberation Sans, sans-serif" font-weight="700" font-size="6.8" fill="#4a4a4a" stroke="none" textLength="7.4" lengthAdjust="spacingAndGlyphs">BC</text></svg>
<svg class="b" style="left:1149px;top:381px;" width="17" height="12" viewBox="0 0 17 12" fill="none" stroke-linecap="round" stroke-linejoin="round"><rect x="1" y="0.4" width="6.8" height="11.2" rx="0.8" fill="#1177d7" stroke="none"/><text x="4.4" y="8.7" text-anchor="middle" font-family="Liberation Sans, sans-serif" font-weight="700" font-size="6.6" fill="#fff" stroke="none" textLength="4.4" lengthAdjust="spacingAndGlyphs">A</text><text x="9" y="8.8" font-family="Liberation Sans, sans-serif" font-weight="700" font-size="6.8" fill="#4a4a4a" stroke="none" textLength="7.4" lengthAdjust="spacingAndGlyphs">BC</text></svg>
<svg class="b" style="left:1345px;top:381px;" width="17" height="12" viewBox="0 0 17 12" fill="none" stroke-linecap="round" stroke-linejoin="round"><rect x="1" y="0.4" width="6.8" height="11.2" rx="0.8" fill="#1177d7" stroke="none"/><text x="4.4" y="8.7" text-anchor="middle" font-family="Liberation Sans, sans-serif" font-weight="700" font-size="6.6" fill="#fff" stroke="none" textLength="4.4" lengthAdjust="spacingAndGlyphs">A</text><text x="9" y="8.8" font-family="Liberation Sans, sans-serif" font-weight="700" font-size="6.8" fill="#4a4a4a" stroke="none" textLength="7.4" lengthAdjust="spacingAndGlyphs">BC</text></svg>
<svg class="b" style="left:1521px;top:381px;" width="17" height="12" viewBox="0 0 17 12" fill="none" stroke-linecap="round" stroke-linejoin="round"><rect x="1" y="0.4" width="6.8" height="11.2" rx="0.8" fill="#1177d7" stroke="none"/><text x="4.4" y="8.7" text-anchor="middle" font-family="Liberation Sans, sans-serif" font-weight="700" font-size="6.6" fill="#fff" stroke="none" textLength="4.4" lengthAdjust="spacingAndGlyphs">A</text><text x="9" y="8.8" font-family="Liberation Sans, sans-serif" font-weight="700" font-size="6.8" fill="#4a4a4a" stroke="none" textLength="7.4" lengthAdjust="spacingAndGlyphs">BC</text></svg>
<svg class="b" style="left:1739px;top:381px;" width="17" height="12" viewBox="0 0 17 12" fill="none" stroke-linecap="round" stroke-linejoin="round"><rect x="1" y="0.4" width="6.8" height="11.2" rx="0.8" fill="#1177d7" stroke="none"/><text x="4.4" y="8.7" text-anchor="middle" font-family="Liberation Sans, sans-serif" font-weight="700" font-size="6.6" fill="#fff" stroke="none" textLength="4.4" lengthAdjust="spacingAndGlyphs">A</text><text x="9" y="8.8" font-family="Liberation Sans, sans-serif" font-weight="700" font-size="6.8" fill="#4a4a4a" stroke="none" textLength="7.4" lengthAdjust="spacingAndGlyphs">BC</text></svg>
<div class="b" style="left:147px;top:386px;width:9px;height:1px;background:#d0d0d0"></div>
<div class="b" style="left:147px;top:388px;width:9px;height:1px;background:#d0d0d0"></div>
<svg class="b" style="left:12px;top:415px;" width="8" height="11" viewBox="0 0 8 11" fill="none" stroke-linecap="round" stroke-linejoin="round"><path d="M1.5 1.2 L7 5.5 L1.5 9.8 Z" stroke="#666" stroke-width="1" fill="none" /></svg>
<span class="t" style="left:142.70px;top:412.50px;font-size:13px;color:#404040;letter-spacing:-0.099px;">19/01/2022 17:39:00</span>
<span class="t" style="left:308.60px;top:412.50px;font-size:13px;color:#404040;letter-spacing:0.004px;">Migrazione DB Audit SQL</span>
<span class="t" style="left:38.50px;top:445.50px;font-size:13px;color:#404040;letter-spacing:-1.171px;">SQL</span>
<span class="t" style="left:142.70px;top:445.50px;font-size:13px;color:#404040;letter-spacing:-0.099px;">14/10/2019 13:33:58</span>
<span class="t" style="left:308.60px;top:445.50px;font-size:13px;color:#404040;letter-spacing:-1.262px;">DELETE</span>
<span class="t" style="left:536.00px;top:445.50px;font-size:13px;color:#404040;letter-spacing:-0.387px;">0x0</span>
<span class="t" style="left:607.40px;top:445.50px;font-size:13px;color:#404040;letter-spacing:0.199px;">bemarplast</span>
<span class="t" style="left:717.00px;top:445.50px;font-size:13px;color:#404040;letter-spacing:-1.104px;">TABLE</span>
<span class="t" style="left:831.30px;top:445.50px;font-size:13px;color:#404040;letter-spacing:0.219px;">MicrosoftAccount\supporto@tuoplanet.com</span>
<span class="t" style="left:1148.50px;top:445.50px;font-size:13px;color:#404040;letter-spacing:0.603px;">dbo</span>
<span class="t" style="left:1519.20px;top:445.50px;font-size:13px;color:#404040;letter-spacing:-0.979px;">BUDGET</span>
<span class="t" style="left:38.50px;top:478.50px;font-size:13px;color:#404040;letter-spacing:-1.171px;">SQL</span>
<span class="t" style="left:142.70px;top:478.50px;font-size:13px;color:#404040;letter-spacing:-0.099px;">14/10/2019 13:28:42</span>
<span class="t" style="left:308.60px;top:478.50px;font-size:13px;color:#404040;letter-spacing:-1.077px;">BACKUP</span>
<span class="t" style="left:536.00px;top:478.50px;font-size:13px;color:#404040;letter-spacing:-0.387px;">0x0</span>
<span class="t" style="left:607.40px;top:478.50px;font-size:13px;color:#404040;letter-spacing:0.199px;">bemarplast</span>
<span class="t" style="left:717.00px;top:478.50px;font-size:13px;color:#404040;letter-spacing:-0.804px;">DATABASE</span>
<span class="t" style="left:831.30px;top:478.50px;font-size:13px;color:#404040;letter-spacing:0.219px;">MicrosoftAccount\supporto@tuoplanet.com</span>
<span class="t" style="left:1148.50px;top:478.50px;font-size:13px;color:#404040;letter-spacing:0.603px;">dbo</span>
<span class="t" style="left:1519.20px;top:478.50px;font-size:13px;color:#404040;letter-spacing:0.199px;">bemarplast</span>
<span class="t" style="left:38.50px;top:511.50px;font-size:13px;color:#404040;letter-spacing:-1.171px;">SQL</span>
<span class="t" style="left:142.70px;top:511.50px;font-size:13px;color:#404040;letter-spacing:-0.099px;">14/10/2019 13:28:18</span>
<span class="t" style="left:308.60px;top:511.50px;font-size:13px;color:#404040;letter-spacing:-0.906px;">INSERT</span>
<span class="t" style="left:536.00px;top:511.50px;font-size:13px;color:#404040;letter-spacing:-0.387px;">0x0</span>
<span class="t" style="left:607.40px;top:511.50px;font-size:13px;color:#404040;letter-spacing:0.199px;">bemarplast</span>
<span class="t" style="left:717.00px;top:511.50px;font-size:13px;color:#404040;letter-spacing:-1.104px;">TABLE</span>
<span class="t" style="left:831.30px;top:511.50px;font-size:13px;color:#404040;letter-spacing:0.219px;">MicrosoftAccount\supporto@tuoplanet.com</span>
<span class="t" style="left:1148.50px;top:511.50px;font-size:13px;color:#404040;letter-spacing:0.603px;">dbo</span>
<span class="t" style="left:1519.20px;top:511.50px;font-size:13px;color:#404040;letter-spacing:-0.979px;">BUDGET</span>
<svg class="b" style="left:1377px;top:413px;" width="18" height="14" viewBox="0 0 18 14" fill="none" stroke-linecap="round" stroke-linejoin="round"><path d="M1.2 1 H13 L16.8 4.6 V12.6 H1.2 Z" stroke="#3f3f3f" stroke-width="1.1" fill="#fff" stroke-linejoin="miter"/><path d="M13 1 V4.6" stroke="#3f3f3f" stroke-width="0.8" fill="none" /></svg>
<svg class="b" style="left:1377px;top:446px;" width="18" height="14" viewBox="0 0 18 14" fill="none" stroke-linecap="round" stroke-linejoin="round"><path d="M1.2 1 H13 L16.8 4.6 V12.6 H1.2 Z" stroke="#3f3f3f" stroke-width="1.1" fill="#fff" stroke-linejoin="miter"/><path d="M13 1 V4.6" stroke="#3f3f3f" stroke-width="0.8" fill="none" /><text x="8.6" y="10.3" text-anchor="middle" font-family="Liberation Serif, serif" font-weight="700" font-size="9.6" fill="#1177d7" stroke="none">A</text></svg>
<svg class="b" style="left:1377px;top:479px;" width="18" height="14" viewBox="0 0 18 14" fill="none" stroke-linecap="round" stroke-linejoin="round"><path d="M1.2 1 H13 L16.8 4.6 V12.6 H1.2 Z" stroke="#3f3f3f" stroke-width="1.1" fill="#fff" stroke-linejoin="miter"/><path d="M13 1 V4.6" stroke="#3f3f3f" stroke-width="0.8" fill="none" /><text x="8.6" y="10.3" text-anchor="middle" font-family="Liberation Serif, serif" font-weight="700" font-size="9.6" fill="#1177d7" stroke="none">A</text></svg>
<svg class="b" style="left:1377px;top:512px;" width="18" height="14" viewBox="0 0 18 14" fill="none" stroke-linecap="round" stroke-linejoin="round"><path d="M1.2 1 H13 L16.8 4.6 V12.6 H1.2 Z" stroke="#3f3f3f" stroke-width="1.1" fill="#fff" stroke-linejoin="miter"/><path d="M13 1 V4.6" stroke="#3f3f3f" stroke-width="0.8" fill="none" /><text x="8.6" y="10.3" text-anchor="middle" font-family="Liberation Serif, serif" font-weight="700" font-size="9.6" fill="#1177d7" stroke="none">A</text></svg>
<div class="b" style="left:0px;top:935px;width:1913px;height:1.5px;background:#d2d2d2"></div>
<div class="b" style="left:16.8px;top:947px;width:30.6px;height:30.6px;background:#1173d4;border-radius:50%"></div>
<div class="b" style="left:31.1px;top:954.6px;width:2px;height:2.2px;background:#fff;border-radius:1px"></div>
<div class="b" style="left:31.3px;top:958.9px;width:1.6px;height:11px;background:#fff"></div>
<span class="t" style="left:54.20px;top:955.84px;font-size:12px;color:#404040;letter-spacing:-0.053px;">To enable the audit of SQL server tables, you need to enable auditing in Studio Management</span>
<div class="b" style="left:548px;top:942px;width:1px;height:43px;background:#dadada"></div>
<span class="t" style="left:557.00px;top:955.84px;font-size:12px;color:#404040;letter-spacing:-0.143px;">DB Sql Audit: 0,19 Mb</span>
<div class="b" style="left:679px;top:942px;width:1px;height:43px;background:#dadada"></div>
<div class="b" style="left:0px;top:990.5px;width:1913px;height:1.5px;background:#d2d2d2"></div>
<div class="b" style="left:0px;top:992.5px;width:1913px;height:34px;background:#f7f7f7"></div>
<svg class="b" style="left:8px;top:1003px;" width="17" height="17" viewBox="0 0 17 17" fill="none" stroke-linecap="round" stroke-linejoin="round"><path d="M1.6 2 V14.6 H15.6" stroke="#666" stroke-width="1.1" fill="none" /><path d="M0.4 4 H1.6 M0.4 6.6 H1.6 M0.4 9.2 H1.6 M0.4 11.8 H1.6" stroke="#666" stroke-width="0.9" fill="none" stroke-linecap="butt"/><text x="4" y="9.4" font-family="Liberation Sans, sans-serif" font-weight="700" font-size="6.6" fill="#1f6fbf" stroke="none">10</text><text x="11.6" y="5.6" font-family="Liberation Sans, sans-serif" font-weight="700" font-size="4.4" fill="#1f6fbf" stroke="none">3</text></svg>
<span class="t" style="left:29.60px;top:1004.02px;font-size:11.5px;color:#333;letter-spacing:-0.158px;">Version : 2.25.1.25</span>
<svg class="b" style="left:136px;top:1003px;" width="17" height="17" viewBox="0 0 17 17" fill="none" stroke-linecap="round" stroke-linejoin="round"><circle cx="8.4" cy="3.8" r="2.5" stroke="#2a7fd6" stroke-width="1.2" fill="none"/><path d="M8.4 6.4 V10 M8.4 10 L4.4 10.6 L1.8 15.4 H15 L12.4 10.6 Z" stroke="#2a7fd6" stroke-width="1.2" fill="none" /></svg>
<span class="t" style="left:158.10px;top:1004.02px;font-size:11.5px;color:#333;letter-spacing:-0.694px;">License : BUSINESS</span>
<svg class="b" style="left:266px;top:1003px;" width="17" height="17" viewBox="0 0 17 17" fill="none" stroke-linecap="round" stroke-linejoin="round"><path d="M8.4 2 L14.4 4.4 V12 L8.4 15.2 L2.4 12 V4.4 Z" stroke="#2a7fd6" stroke-width="1.1" fill="none" /><circle cx="8.4" cy="2" r="1.5" stroke="none" fill="#2a7fd6"/><circle cx="14.4" cy="4.4" r="1.5" stroke="none" fill="#2a7fd6"/><circle cx="14.4" cy="12" r="1.5" stroke="none" fill="#2a7fd6"/><circle cx="8.4" cy="15.2" r="1.5" stroke="none" fill="#2a7fd6"/><circle cx="2.4" cy="12" r="1.5" stroke="none" fill="#2a7fd6"/><circle cx="2.4" cy="4.4" r="1.5" stroke="none" fill="#2a7fd6"/><path d="M5.4 5.6 H11.4 L8.4 8.8 V12 Z" stroke="#2a7fd6" stroke-width="1.1" fill="none" /></svg>
<span class="t" style="left:288.60px;top:1004.02px;font-size:11.5px;color:#333;letter-spacing:-0.046px;">Nodes: 11 / 80</span>
<svg class="b" style="left:376px;top:1003px;" width="17" height="17" viewBox="0 0 17 17" fill="none" stroke-linecap="round" stroke-linejoin="round"><path d="M8 14.4 H3 a1.8 1.8 0 0 1 -1.8 -1.8 V3.4 a1.8 1.8 0 0 1 1.8 -1.8 H13 a1.8 1.8 0 0 1 1.8 1.8 V7 M1.2 4.8 H14.8" stroke="#f68d11" stroke-width="1.2" fill="none" /><circle cx="12.3" cy="12.2" r="4.2" stroke="none" fill="#f68d11"/><path d="M12.2 10 V12.4 H14" stroke="#fff" stroke-width="1" fill="none" /></svg>
<span class="t" style="left:397.20px;top:1004.02px;font-size:11.5px;color:#333;letter-spacing:-0.040px;">Expiration: 16/07/2069</span>
<svg class="b" style="left:526px;top:1003px;" width="17" height="17" viewBox="0 0 17 17" fill="none" stroke-linecap="round" stroke-linejoin="round"><g transform="translate(0.8 0.6)"><path d="M2.5 3.6 A5.2 2.4 0 0 1 12.9 3.6 V5.4 A5.2 2.4 0 0 1 2.5 5.4 Z" fill="#f68d11" stroke="none" /><path d="M2.5 7.2 Q7.7 10.4 12.9 7.2 V9.6 A5.2 2.4 0 0 1 2.5 9.6 Z" fill="#f68d11" stroke="none" /><path d="M2.5 11.4 Q7.7 14.6 12.9 11.4 V12.8 A5.2 2.4 0 0 1 2.5 12.8 Z" fill="#f68d11" stroke="none" /></g></svg>
<span class="t" style="left:547.30px;top:1004.02px;font-size:11.5px;color:#333;letter-spacing:-0.155px;">DB Working: (1.4.2.9): 22,37 Mb</span>
<svg class="b" style="left:721px;top:1003px;" width="17" height="17" viewBox="0 0 17 17" fill="none" stroke-linecap="round" stroke-linejoin="round"><rect x="0.8" y="2.2" width="15.4" height="13.4" rx="0" stroke="#555" stroke-width="1.1" fill="none"/><path d="M5.6 6 A2.9 1.3 0 0 1 11.4 6 V11.8 A2.9 1.3 0 0 1 5.6 11.8 Z" fill="#f68d11" stroke="none" /></svg>
<span class="t" style="left:743.60px;top:1004.02px;font-size:11.5px;color:#333;letter-spacing:-0.369px;">C:\ 93 Gb</span>
<svg class="b" style="left:806.5px;top:1003px;" width="17" height="17" viewBox="0 0 17 17" fill="none" stroke-linecap="round" stroke-linejoin="round"><circle cx="8.6" cy="5.2" r="3.4" stroke="#168c74" stroke-width="1.2" fill="none"/><path d="M2 11.2 H15.2 Q15.2 15.8 8.6 15.8 Q2 15.8 2 11.2 Z" stroke="#168c74" stroke-width="1.2" fill="none" /></svg>
<span class="t" style="left:828.40px;top:1004.02px;font-size:11.5px;color:#333;letter-spacing:0.054px;">User : blog</span>
<svg class="b" style="left:1453px;top:1003px;" width="17" height="17" viewBox="0 0 17 17" fill="none" stroke-linecap="round" stroke-linejoin="round"><path d="M8.6 1.4 V12.4 M3.8 8 L8.6 12.8 L13.4 8 M2.6 15.8 H14.6" stroke="#168c74" stroke-width="1.2" fill="none" /></svg>
<span class="t" style="left:1475.70px;top:1004.02px;font-size:11.5px;color:#333;letter-spacing:-0.407px;font-weight:700;">On Arrives: 0</span>
<div class="b" style="left:1550px;top:998px;width:97.6px;height:28px;background:#00008b"></div>
<svg class="b" style="left:1556px;top:1003px;" width="17" height="17" viewBox="0 0 17 17" fill="none" stroke-linecap="round" stroke-linejoin="round"><path d="M1 4 V1.4 H4 M12 1.4 H15 V4 M1 12 V14.6 H15 M13 12.8 L15 14.6 L13 16.4" stroke="#3f86e0" stroke-width="1" fill="none" /><circle cx="8" cy="7.6" r="2.2" stroke="#3f86e0" stroke-width="1.1" fill="none"/><line x1="11.10" y1="7.60" x2="12.60" y2="7.60" stroke="#3f86e0" stroke-width="1.4"/><line x1="4.90" y1="7.60" x2="3.40" y2="7.60" stroke="#3f86e0" stroke-width="1.4"/><line x1="8.00" y1="10.70" x2="8.00" y2="12.20" stroke="#3f86e0" stroke-width="1.4"/><line x1="8.00" y1="4.50" x2="8.00" y2="3.00" stroke="#3f86e0" stroke-width="1.4"/><line x1="10.19" y1="9.79" x2="11.25" y2="10.85" stroke="#3f86e0" stroke-width="1.4"/><line x1="5.81" y1="9.79" x2="4.75" y2="10.85" stroke="#3f86e0" stroke-width="1.4"/><line x1="10.19" y1="5.41" x2="11.25" y2="4.35" stroke="#3f86e0" stroke-width="1.4"/><line x1="5.81" y1="5.41" x2="4.75" y2="4.35" stroke="#3f86e0" stroke-width="1.4"/></svg>
<span class="t" style="left:1577.30px;top:1004.02px;font-size:11.5px;color:#fff;letter-spacing:-0.397px;font-weight:700;">On Queue: 1</span>
<svg class="b" style="left:1655px;top:1003px;" width="17" height="17" viewBox="0 0 17 17" fill="none" stroke-linecap="round" stroke-linejoin="round"><path d="M1 4.4 A6.6 2.6 0 0 1 14.2 4.4 A6.6 2.6 0 0 1 1 4.4 Z M1 4.6 Q1.4 8.8 7 9.4 M14.2 4.6 V6.4" stroke="#dc4a58" stroke-width="1.2" fill="none" /><circle cx="11.4" cy="11.6" r="4.6" stroke="none" fill="#dc4a58"/><path d="M9.2 11.6 L10.8 13.2 L13.6 10.2" stroke="#fff" stroke-width="1.2" fill="none" /></svg>
<span class="t" style="left:1677.00px;top:1004.02px;font-size:11.5px;color:#333;letter-spacing:-0.626px;font-weight:700;">On Process: 0</span>
<svg class="b" style="left:1760px;top:1003px;" width="17" height="17" viewBox="0 0 17 17" fill="none" stroke-linecap="round" stroke-linejoin="round"><rect x="2" y="2.2" width="5.6" height="5.6" fill="#1b75d0" stroke="none"/><rect x="2" y="9" width="5.6" height="5.6" fill="#1b75d0" stroke="none"/><rect x="8.8" y="2.2" width="5.6" height="5.6" fill="#1b75d0" stroke="none"/><rect x="8.8" y="9" width="5.6" height="5.6" fill="#1b75d0" stroke="none"/></svg>
<span class="t" style="left:1781.30px;top:1004.02px;font-size:11.5px;color:#333;letter-spacing:-0.168px;">Skin</span>
<svg class="b" style="left:1806px;top:1009px;" width="8" height="8" viewBox="0 0 8 8" fill="none" stroke-linecap="round" stroke-linejoin="round"><path d="M1.5 2.8 L4 5.3 L6.5 2.8" stroke="#444" stroke-width="1.1" fill="none" /></svg>
<svg class="b" style="left:1829px;top:1006px;" width="17" height="11" viewBox="0 0 17 11" fill="none" stroke-linecap="round" stroke-linejoin="round"><rect x="0" y="0.5" width="5.4" height="10" fill="#3f9c5a" stroke="none"/><rect x="5.4" y="0.5" width="5.8" height="10" fill="#f4f4f4" stroke="none"/><rect x="11.2" y="0.5" width="5.6" height="10" fill="#d5443c" stroke="none"/></svg>
<span class="t" style="left:1850.80px;top:1004.02px;font-size:11.5px;color:#333;letter-spacing:-0.092px;">Made in Italy</span>
</body></html>
